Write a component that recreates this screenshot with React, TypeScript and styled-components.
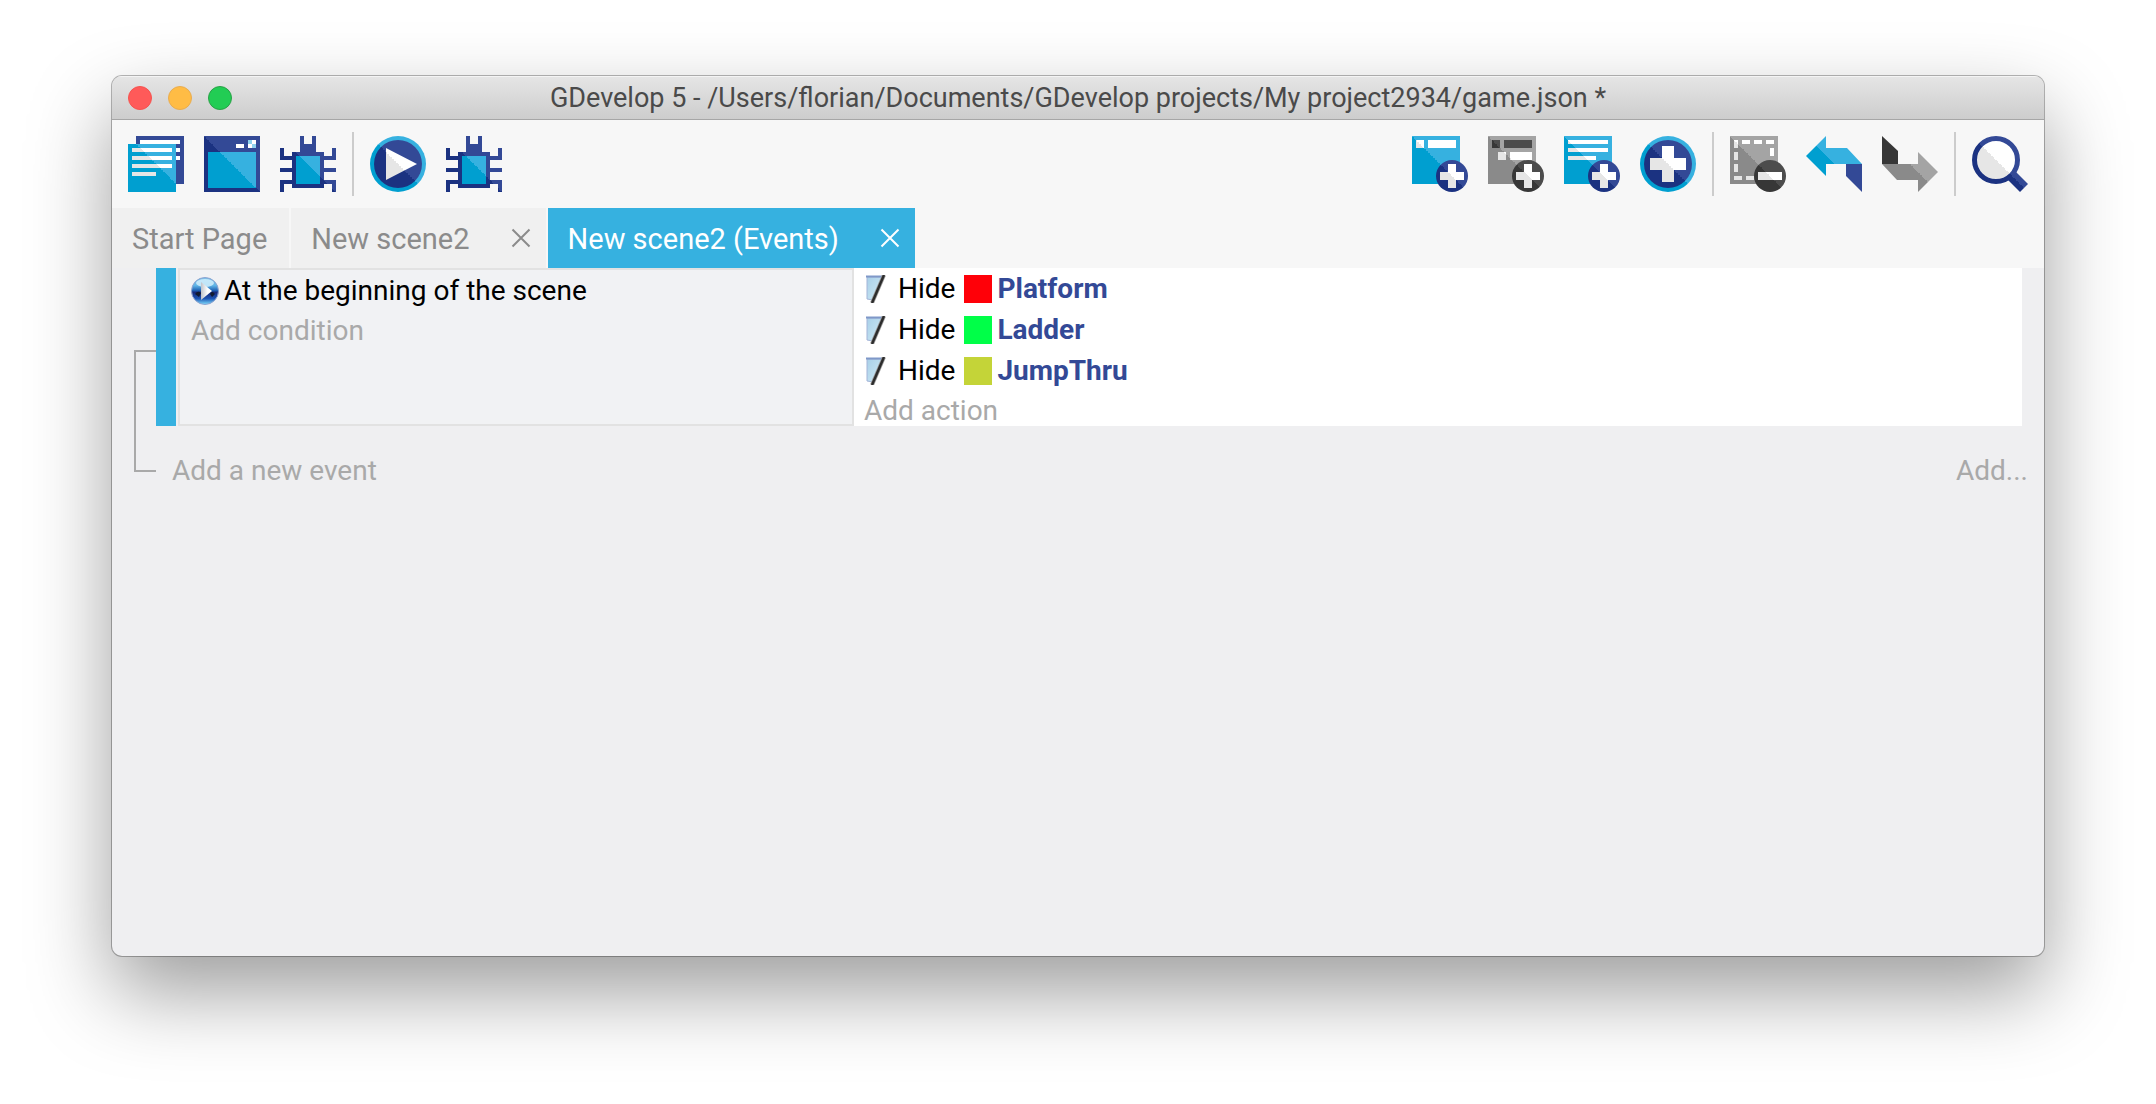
import React from 'react';
import styled, { createGlobalStyle } from 'styled-components';

const GlobalStyle = createGlobalStyle`
  *, *::before, *::after { box-sizing: border-box; }
  body { margin: 0; background: #fff; font-family: Roboto, "Liberation Sans", sans-serif; }
  button { font: inherit; color: inherit; border: 0; padding: 0; margin: 0; background: none; cursor: pointer; }
`;

const Page = styled.div`
  display: flex;
  flex-direction: column;
  min-height: 100vh;
  padding: 76px 112px 148px;
`;

const Window = styled.div`
  flex: 1;
  display: flex;
  flex-direction: column;
  border-radius: 10px;
  overflow: hidden;
  background: #efeff1;
  box-shadow: 0 0 0 1px rgba(0, 0, 0, 0.28), 0 36px 82px rgba(0, 0, 0, 0.39);
`;

const TitleBar = styled.header`
  display: grid;
  grid-template-columns: 1fr auto 1fr;
  align-items: center;
  height: 44px;
  padding: 0 16px;
  background: linear-gradient(#e5e5e5, #cdcdcd);
  border-top: 1px solid #f4f4f4;
  border-bottom: 1px solid #a6a6a6;
`;

const TrafficLights = styled.div`
  display: flex;
  gap: 16px;
`;

const Light = styled.button<{ $color: string; $edge: string }>`
  width: 24px;
  height: 24px;
  border-radius: 50%;
  background: ${(p) => p.$color};
  border: 1px solid ${(p) => p.$edge};
`;

const Title = styled.h1`
  margin: 0;
  font-size: 27px;
  line-height: 42px;
  font-weight: 400;
  color: #4a4a4a;
  white-space: nowrap;
`;

const Toolbar = styled.div`
  display: flex;
  justify-content: space-between;
  align-items: center;
  height: 88px;
  padding: 0 16px;
  background: #f7f7f7;
`;

const ToolGroup = styled.div`
  display: flex;
  align-items: center;
  gap: 16px;
`;

const ToolSet = styled.div`
  display: flex;
  gap: 20px;
`;

const Separator = styled.span`
  width: 2px;
  height: 64px;
  background: #ccc;
`;

const ToolButton = styled.button`
  display: block;
  width: 56px;
  height: 56px;
  svg { display: block; }
`;

const Tabs = styled.nav`
  display: flex;
  gap: 2px;
  background: #f7f7f7;
`;

const Tab = styled.div<{ $active?: boolean }>`
  display: flex;
  height: 60px;
  background: ${(p) => (p.$active ? '#36b1e0' : '#f0f0f0')};
  color: ${(p) => (p.$active ? '#fff' : '#8b8b8b')};
`;

const TabLabel = styled.button`
  padding: 0 22px 0 20px;
  font-size: 29px;
  line-height: 62px;
  white-space: nowrap;
`;

const TabClose = styled.button`
  display: flex;
  align-items: center;
  justify-content: center;
  width: 50px;
  margin-left: 4px;
`;

const Sheet = styled.main`
  display: flex;
  font-size: 28px;
`;

const Connector = styled.div`
  width: 22px;
  height: 122px;
  margin: 82px 0 0 22px;
  border: 2px solid #a9a9a9;
  border-right: 0;
`;

const Events = styled.div`
  flex: 1;
`;

const EventRow = styled.section`
  display: flex;
  margin-right: 22px;
`;

const Handle = styled.div`
  width: 20px;
  margin-right: 2px;
  background: #36b1e0;
`;

const Conditions = styled.div`
  flex: 0 0 676px;
  padding-left: 11px;
  border: 2px solid #e2e2e2;
  background: #f1f2f4;
`;

const Actions = styled.div`
  flex: 1;
  padding-left: 10px;
  background: #fff;
`;

const Line = styled.div`
  display: flex;
  align-items: center;
  height: 41px;
  gap: 5px;
  line-height: 41px;
  color: #000;
  white-space: nowrap;
`;

const Verb = styled.span`
  padding: 0 4px 0 1px;
`;

const Swatch = styled.span<{ $color: string }>`
  width: 28px;
  height: 28px;
  background: ${(p) => p.$color};
`;

const ObjectName = styled.strong`
  font-weight: 700;
  color: #334996;
`;

const AddLink = styled.button`
  display: block;
  padding-top: 5px;
  line-height: 30px;
  color: #a9a9a9;
`;

const Footer = styled.footer`
  display: flex;
  justify-content: space-between;
  margin-top: 25px;
  padding: 0 16px;
`;

const Defs = styled.svg`
  position: absolute;
  width: 0;
  height: 0;
`;

const tones: [string, string, string][] = [
  ['blue', '#009fd0', '#36b1e0'],
  ['navy', '#1b3281', '#334996'],
  ['white', '#e6e6e6', '#ffffff'],
  ['gray', '#8a8a8a', '#a4a4a4'],
  ['dark', '#373737', '#4c4c4c'],
];

const Tones = () => (
  <Defs aria-hidden="true">
    <defs>
      {tones.map(([id, low, high]) => (
        <linearGradient key={id} id={id} gradientUnits="userSpaceOnUse" x1="0" y1="56" x2="56" y2="0">
          <stop offset="0.5" stopColor={low} />
          <stop offset="0.5" stopColor={high} />
        </linearGradient>
      ))}
      <linearGradient id="gloss" x1="0" y1="0" x2="0" y2="1">
        <stop offset="0" stopColor="#7cc4ea" />
        <stop offset="0.3" stopColor="#5fb4e6" />
        <stop offset="0.48" stopColor="#1f62b4" />
        <stop offset="0.55" stopColor="#17287a" />
        <stop offset="0.78" stopColor="#1d55b4" />
        <stop offset="1" stopColor="#7fe0ff" />
      </linearGradient>
      <linearGradient id="arrow" x1="0" y1="0" x2="1" y2="0">
        <stop offset="0" stopColor="#bfc3cb" />
        <stop offset="0.6" stopColor="#ffffff" />
      </linearGradient>
      <linearGradient id="paper" x1="0" y1="0" x2="1" y2="1">
        <stop offset="0" stopColor="#a9d0e8" />
        <stop offset="1" stopColor="#cfeaf5" />
      </linearGradient>
    </defs>
  </Defs>
);

const Glyph = ({ children }: { children: React.ReactNode }) => (
  <svg width="56" height="56" viewBox="0 0 56 56" aria-hidden="true">
    {children}
  </svg>
);

const BadgePlus = ({ tone }: { tone: string }) => (
  <>
    <circle cx="40" cy="40" r="16" fill={`url(#${tone})`} />
    <path d="M36 28h8v8h8v8h-8v8h-8v-8h-8v-8h8z" fill="url(#white)" />
  </>
);

const ProjectIcon = () => (
  <Glyph>
    <path d="M8 0h48v48H8z" fill="url(#navy)" />
    <path d="M12 4h40v4H12zM46 12h6v4h-6zM46 20h6v4h-6z" fill="#fff" />
    <path d="M0 8h48v48H0z" fill="url(#blue)" />
    <path d="M4 12h40v4H4zM4 20h40v4H4zM4 28h40v4H4zM4 36h24v4H4z" fill="url(#white)" />
    <path d="M48 12h4v4h-4zM48 20h4v4h-4z" fill="#fff" />
  </Glyph>
);

const SceneIcon = () => (
  <Glyph>
    <path d="M0 0h56v56H0z" fill="url(#navy)" />
    <path d="M4 16h48v36H4z" fill="url(#blue)" />
    <path d="M32 8h8v4h-8zM44 4h8v8h-8z" fill="#fff" />
    <path d="M44 4h4v4h-4zM48 8h4v4h-4z" fill="#8fd3ee" />
  </Glyph>
);

const DebugIcon = () => (
  <Glyph>
    <path
      d="M20 0h4v8h8V0h4v16h8v4h8v-8h4v12H44v8h12v4H44v8h12v12h-4v-8h-8v4H12v-4H4v8H0V44h12v-8H0v-4h12v-8H0V12h4v8h8v-4h8z"
      fill="url(#navy)"
    />
    <path d="M16 20h24v28H16z" fill="url(#blue)" />
  </Glyph>
);

const PlayIcon = () => (
  <Glyph>
    <circle cx="28" cy="28" r="28" fill="url(#blue)" />
    <circle cx="28" cy="28" r="24" fill="url(#navy)" />
    <path d="M16 12l31 16-31 16z" fill="url(#white)" />
  </Glyph>
);

const AddEventIcon = () => (
  <Glyph>
    <path d="M0 0h48v48H0z" fill="url(#blue)" />
    <path d="M4 4h8v8H4zM16 4h28v8H16z" fill="url(#white)" />
    <BadgePlus tone="navy" />
  </Glyph>
);

const AddSubEventIcon = () => (
  <Glyph>
    <path d="M0 0h48v48H0z" fill="url(#gray)" />
    <path d="M4 4h8v8H4zM16 4h28v8H16z" fill="url(#dark)" />
    <path d="M10 16h8v8h-8zM22 16h22v8H22z" fill="url(#white)" />
    <BadgePlus tone="dark" />
  </Glyph>
);

const AddCommentIcon = () => (
  <Glyph>
    <path d="M0 0h48v48H0z" fill="url(#blue)" />
    <path d="M4 4h40v4H4zM4 12h40v4H4zM4 20h28v4H4z" fill="url(#white)" />
    <BadgePlus tone="navy" />
  </Glyph>
);

const AddIcon = () => (
  <Glyph>
    <circle cx="28" cy="28" r="28" fill="url(#blue)" />
    <circle cx="28" cy="28" r="24" fill="url(#navy)" />
    <path d="M22 10h12v12h12v12H34v12H22V34H10V22h12z" fill="url(#white)" />
  </Glyph>
);

const RemoveIcon = () => (
  <Glyph>
    <path d="M0 0h48v48H0z" fill="url(#gray)" />
    <path
      d="M12 4h8v4h-8zM24 4h8v4h-8zM36 4h8v4h-8zM4 4h4v8H4zM4 16h4v8H4zM4 28h4v8H4zM4 40h8v4H4zM16 40h8v4h-8zM40 12h4v8h-4z"
      fill="url(#white)"
    />
    <circle cx="40" cy="40" r="16" fill="url(#dark)" />
    <path d="M28 36h24v8H28z" fill="url(#white)" />
  </Glyph>
);

const UndoIcon = () => (
  <Glyph>
    <path d="M0 20L20 0v12h21l15 16H20v12z" fill="url(#blue)" />
    <path d="M40 28h16v28L40 40z" fill="#334996" />
  </Glyph>
);

const RedoIcon = () => (
  <Glyph>
    <path d="M0 28h36V16l20 20-20 20V44H15z" fill="url(#gray)" />
    <path d="M0 0l16 15v13H0z" fill="#373737" />
  </Glyph>
);

const SearchIcon = () => (
  <Glyph>
    <path d="M43 35l13 13-8 8-13-13z" fill="url(#navy)" />
    <circle cx="24" cy="24" r="21.5" fill="url(#white)" stroke="url(#navy)" strokeWidth="5" />
  </Glyph>
);

const StartIcon = () => (
  <svg width="28" height="28" viewBox="0 0 28 28" aria-hidden="true">
    <circle cx="14" cy="14" r="13.5" fill="url(#gloss)" stroke="#8fa3cf" />
    <ellipse cx="14" cy="6" rx="9" ry="4" fill="#d8f1fc" opacity="0.8" />
    <path d="M4 17q3-4 6-1l-2 4zM24 17q-3-4-5 0l2 3z" fill="#121a30" />
    <path d="M10 5l11 9-11 9z" fill="url(#arrow)" />
  </svg>
);

const HideIcon = () => (
  <svg width="28" height="28" viewBox="0 0 28 28" aria-hidden="true">
    <path d="M3 2h15L9 25l-6-1z" fill="url(#paper)" stroke="#a3b4d8" strokeWidth="1" />
    <path d="M2 1.5h16" stroke="#7f98c8" strokeWidth="2" />
    <path d="M20 0L8 28" stroke="#9a9a9a" strokeWidth="4" />
    <path d="M20 0L8 28" stroke="#2c2c2c" strokeWidth="2.4" />
  </svg>
);

const CloseIcon = () => (
  <svg width="20" height="20" viewBox="0 0 20 20" aria-hidden="true">
    <path d="M1.5 1.5l17 17M18.5 1.5l-17 17" stroke="currentColor" strokeWidth="2" />
  </svg>
);

type Tool = [string, () => React.ReactElement];

const leftTools: Tool[][] = [
  [['Project manager', ProjectIcon], ['Scene', SceneIcon], ['Debugger', DebugIcon]],
  [['Preview', PlayIcon], ['Preview with debugger', DebugIcon]],
];

const rightTools: Tool[][] = [
  [['Add event', AddEventIcon], ['Add sub-event', AddSubEventIcon], ['Add comment', AddCommentIcon], ['Add other', AddIcon]],
  [['Delete selection', RemoveIcon], ['Undo', UndoIcon], ['Redo', RedoIcon]],
  [['Search', SearchIcon]],
];

const Tools = ({ sets }: { sets: Tool[][] }) => (
  <ToolGroup>
    {sets.map((set, i) => (
      <React.Fragment key={i}>
        {i > 0 && <Separator />}
        <ToolSet>
          {set.map(([label, Icon]) => (
            <ToolButton key={label} type="button" aria-label={label}>
              <Icon />
            </ToolButton>
          ))}
        </ToolSet>
      </React.Fragment>
    ))}
  </ToolGroup>
);

const tabs = [
  { label: 'Start Page' },
  { label: 'New scene2', closable: true },
  { label: 'New scene2 (Events)', closable: true, active: true },
];

const hidden = [
  { name: 'Platform', color: '#ff0008' },
  { name: 'Ladder', color: '#00ff48' },
  { name: 'JumpThru', color: '#c4d438' },
];

export default function App() {
  return (
    <Page>
      <GlobalStyle />
      <Tones />
      <Window>
        <TitleBar>
          <TrafficLights>
            <Light type="button" aria-label="Close" $color="#ff5a59" $edge="#f5534f" />
            <Light type="button" aria-label="Minimize" $color="#ffbc45" $edge="#e8ac50" />
            <Light type="button" aria-label="Zoom" $color="#22cd54" $edge="#2aa147" />
          </TrafficLights>
          <Title>GDevelop 5 - /Users/florian/Documents/GDevelop projects/My project2934/game.json *</Title>
        </TitleBar>
        <Toolbar>
          <Tools sets={leftTools} />
          <Tools sets={rightTools} />
        </Toolbar>
        <Tabs>
          {tabs.map((tab) => (
            <Tab key={tab.label} $active={tab.active}>
              <TabLabel type="button">{tab.label}</TabLabel>
              {tab.closable && (
                <TabClose type="button" aria-label={`Close ${tab.label}`}>
                  <CloseIcon />
                </TabClose>
              )}
            </Tab>
          ))}
        </Tabs>
        <Sheet>
          <Connector />
          <Events>
            <EventRow>
              <Handle />
              <Conditions>
                <Line>
                  <StartIcon />
                  At the beginning of the scene
                </Line>
                <AddLink type="button">Add condition</AddLink>
              </Conditions>
              <Actions>
                {hidden.map((object) => (
                  <Line key={object.name}>
                    <HideIcon />
                    <Verb>Hide</Verb>
                    <Swatch $color={object.color} />
                    <ObjectName>{object.name}</ObjectName>
                  </Line>
                ))}
                <AddLink type="button">Add action</AddLink>
              </Actions>
            </EventRow>
            <Footer>
              <AddLink type="button">Add a new event</AddLink>
              <AddLink type="button">Add...</AddLink>
            </Footer>
          </Events>
        </Sheet>
      </Window>
    </Page>
  );
}
